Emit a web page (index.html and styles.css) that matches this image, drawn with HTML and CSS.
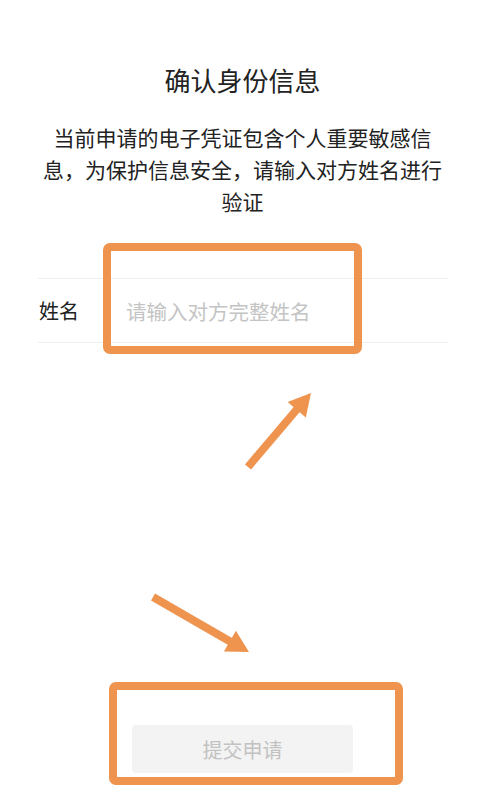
FILE: index.html
```html
<!DOCTYPE html>
<html lang="zh-CN">
<head>
<meta charset="utf-8">
<title>确认身份信息</title>
<link rel="stylesheet" href="styles.css">
</head>
<body>
<main class="page">
  <h1 class="title">确认身份信息</h1>
  <p class="desc">当前申请的电子凭证包含个人重要敏感信息，为保护信息安全，请输入对方姓名进行验证</p>
  <div class="field">
    <label class="field-label" for="name">姓名</label>
    <input class="field-input" id="name" type="text" placeholder="请输入对方完整姓名">
  </div>
  <div class="actions">
    <button class="submit" type="button" disabled>提交申请</button>
  </div>
  <svg class="annotations" width="485" height="800" viewBox="0 0 485 800" aria-hidden="true">
    <g fill="none" stroke="#ee944f" stroke-width="8" stroke-linejoin="round">
      <rect x="107" y="247" width="251" height="103" rx="3"/>
      <rect x="113" y="686" width="286" height="95" rx="3"/>
    </g>
    <g stroke="#ee944f" stroke-width="8" fill="#ee944f">
      <line x1="248" y1="467" x2="298" y2="408"/>
      <polygon points="311,393 305.8,417.6 287.6,402" stroke="none"/>
      <line x1="153" y1="597" x2="231" y2="642"/>
      <polygon points="249,652 223.9,651.5 235.9,630.7" stroke="none"/>
    </g>
  </svg>
</main>
</body>
</html>
```

FILE: styles.css
```css
* {
  box-sizing: border-box;
}

html, body {
  margin: 0;
  padding: 0;
  background: #ffffff;
}

body {
  font-family: "Noto Sans CJK SC", "Noto Sans", sans-serif;
  color: #222222;
}

.page {
  position: relative;
  width: 485px;
  height: 800px;
  overflow: hidden;
  padding-top: 62px;
}

.title {
  margin: 0;
  font-size: 26px;
  line-height: 36px;
  font-weight: 400;
  text-align: center;
  color: #222222;
}

.desc {
  margin: 23px 0 0;
  padding: 0 38px;
  font-size: 21px;
  line-height: 32px;
  text-align: center;
  color: #222222;
}

.field {
  display: flex;
  align-items: center;
  margin: 61px 37px 0 38px;
  height: 65px;
  border-top: 1px solid #efefef;
  border-bottom: 1px solid #efefef;
}

.field-label {
  width: 88px;
  padding-left: 1px;
  font-size: 20px;
  color: #222222;
}

.field-input {
  flex: 1;
  min-width: 0;
  border: none;
  outline: none;
  padding: 0;
  background: transparent;
  font-family: inherit;
  font-size: 20.5px;
  color: #222222;
}

.field-input::placeholder {
  color: #c4c4c4;
}

.actions {
  display: flex;
  justify-content: center;
  margin-top: 382px;
}

.submit {
  width: 221px;
  height: 48px;
  border: none;
  border-radius: 4px;
  background: #f3f3f3;
  color: #c2c2c2;
  font-family: inherit;
  font-size: 20px;
  padding: 0;
}

.annotations {
  position: absolute;
  left: 0;
  top: 0;
  pointer-events: none;
}
```
